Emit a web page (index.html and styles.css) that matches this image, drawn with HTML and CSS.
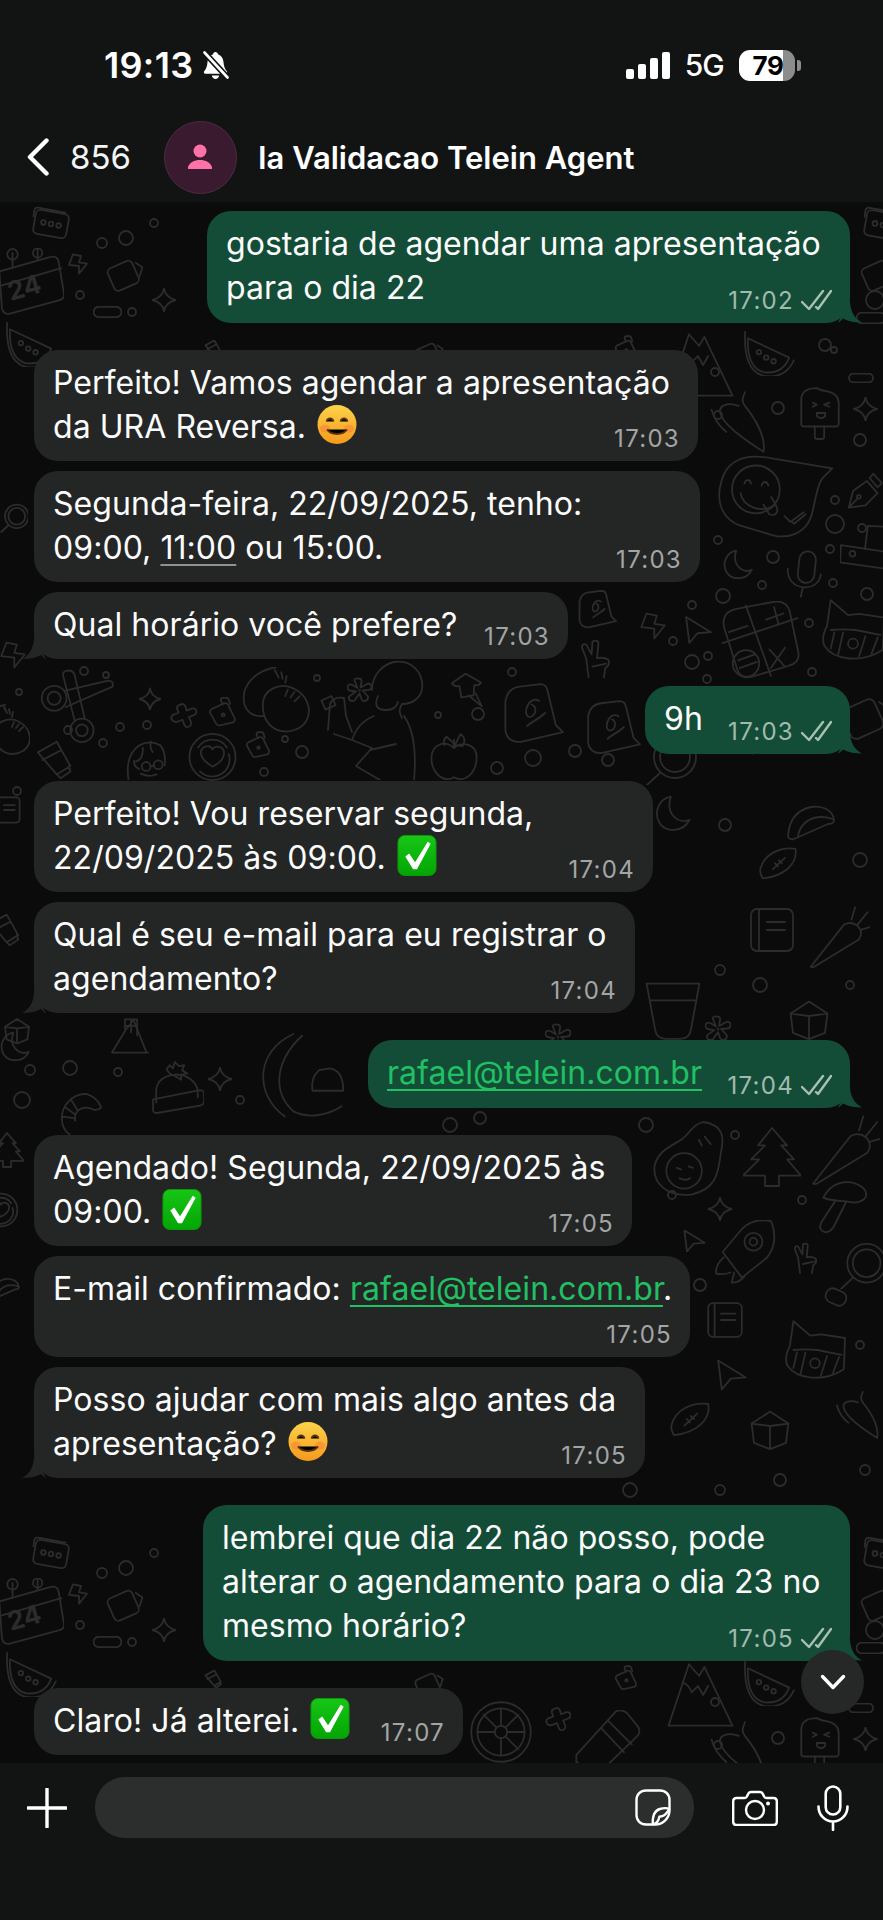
FILE: index.html
```html
<!DOCTYPE html>
<html>
	<head>
		<meta charset="utf-8">
		<title>Ia Validacao Telein Agent</title>
		<link rel="stylesheet" href="styles.css">
	</head>
	<body>
		<header class="top">
			<div class="status">
				<div class="status-left">
					<span class="clock">19:13</span>
					<svg class="bell" viewBox="0 0 27 29"><path d="M13.5 1c-1.4 0-2.3 1-2.4 2.2C7.600 4.300 5.800 7.500 5.500 11c-.3 4-1 6.300-3.300 9.300-.8 1-.2 2.400 1.200 2.400h20.200c1.400 0 2-1.400 1.200-2.400-2.300-3-3-5.300-3.300-9.300-.3-3.500-2.100-6.700-5.600-7.800C15.800 2 14.900 1 13.500 1z" fill="#fff"/><path d="M9.800 24.400c.4 2 1.900 3.600 3.700 3.600s3.300-1.600 3.700-3.600z" fill="#fff"/><path d="M2 1l24 26" stroke="#121414" stroke-width="6"/><path d="M2.500 1.500l23 25" stroke="#fff" stroke-width="2.600" stroke-linecap="round"/></svg>
				</div>
				<div class="status-right">
					<div class="signal"><i></i><i></i><i></i><i></i></div>
					<span class="net">5G</span>
					<div class="battery"><span>79</span></div>
					<div class="battery-nub"></div>
				</div>
			</div>
			<div class="nav">
				<svg class="back" viewBox="0 0 22 38"><path d="M19.500 2.500L3 19l16.500 16.500" fill="none" stroke="#fff" stroke-width="4.400" stroke-linecap="round" stroke-linejoin="round"/></svg>
				<span class="count">856</span>
				<div class="avatar">
					<svg viewBox="0 0 24 26"><circle cx="12" cy="7" r="6.500" fill="#ff72a8"/><path d="M.5 25c-.6 0-1-.5-.8-1.100C1 19 6 16 12 16s11 3 12.300 7.900c.2.600-.2 1.100-.8 1.100z" fill="#ff72a8"/></svg>
				</div>
				<h1 class="name">Ia Validacao Telein Agent</h1>
			</div>
		</header>

		<main class="chat">
			<svg class="wall" viewBox="0 202 883 1561" fill="none" stroke="#2c2c2c" stroke-width="1.800" stroke-linecap="round" stroke-linejoin="round">
				<defs>
					<linearGradient id="smile-fill" x1="0" y1="0" x2="0" y2="1"><stop offset="0" stop-color="#fcd34a"/><stop offset="1" stop-color="#f59a1c"/></linearGradient>
					<linearGradient id="check-fill" x1="0" y1="0" x2="0" y2="1"><stop offset="0" stop-color="#17c617"/><stop offset="1" stop-color="#03a503"/></linearGradient>
					<symbol id="emoji-smile" viewBox="0 0 40 40"><circle cx="20" cy="20" r="19.500" fill="url(#smile-fill)" stroke="none"/><ellipse cx="8" cy="24" rx="5" ry="4" fill="#f7803a" opacity=".55" stroke="none"/><ellipse cx="32" cy="24" rx="5" ry="4" fill="#f7803a" opacity=".55" stroke="none"/><path d="M9.500 17c1-4 6-4 7 0M23.500 17c1-4 6-4 7 0M10 25c4 6 16 6 20 0" stroke="#5b3510" stroke-width="1.800"/></symbol>
					<symbol id="emoji-check" viewBox="0 0 40 42"><rect x=".5" y=".5" width="39" height="41" rx="7" fill="url(#check-fill)" stroke="#0c9a0c"/><path d="M8 22l4-3 6 9L31 7l3 2-14 26h-4z" fill="#fff" stroke="none"/></symbol>

					<symbol id="notes" viewBox="0 0 100 100"><rect x="6" y="18" width="88" height="64" rx="12" transform="rotate(10 50 50)"/><path d="M4 30l2-16q2-8 10-7l72 13"/><circle cx="30" cy="46" r="6"/><circle cx="50" cy="50" r="6"/><circle cx="70" cy="54" r="6"/></symbol>
					<symbol id="cal" viewBox="0 0 100 100"><path d="M2 34l78-22q10-2 12 8l8 48q1 8-8 10L18 98Q8 100 6 90z"/><path d="M6 55l90-26M22 26V6M60 16V0"/><circle cx="22" cy="8" r="8"/><circle cx="60" cy="6" r="7"/></symbol>
					<symbol id="bolt" viewBox="0 0 100 100"><path d="M25 2l40 8-10 32 40 6-40 50 0-38-50-6z"/></symbol>
					<symbol id="boxcam" viewBox="0 0 100 100"><rect x="10" y="18" width="70" height="64" rx="12" transform="rotate(-24 50 50)"/><path d="M78 18l18 12-8 24"/></symbol>
					<symbol id="star" viewBox="0 0 100 100"><path d="M50 2q6 38 48 48-42 10-48 48Q44 60 2 50 44 40 50 2z"/></symbol>
					<symbol id="melon" viewBox="0 0 100 100"><path d="M4 18l90 42Q80 96 40 92 2 84 4 18z"/><path d="M-2 4Q-6 90 40 100q46 6 64-34"/><circle cx="28" cy="48" r="5"/><circle cx="44" cy="60" r="5"/><circle cx="60" cy="68" r="5"/></symbol>
					<symbol id="pop" viewBox="0 0 100 100"><path d="M14 72V22Q16 2 44 2q10 6 18 6 24 4 24 24v38q0 6-6 6H20q-6 0-6-4z"/><path d="M40 76v20q0 4 5 4h8q5 0 5-4V76"/><path d="M36 30l8 4-8 4M68 30l-10 4 10 4M44 50h16v6q-8 8-16 0z"/></symbol>
					<symbol id="chili" viewBox="0 0 100 100"><path d="M58 2c-4 10-6 14 0 22 16 20 34 50 30 74C66 84 22 56 18 34c-2-12 14-16 30-10"/><path d="M4 30q6 22 24 36"/></symbol>
					<symbol id="smiley" viewBox="0 0 120 90"><path d="M12 12C24 0 40 0 60 4l60 10-10 10c-6 6-8 26-12 40-6 18-24 24-40 20L24 74C6 68 0 52 2 36 4 26 6 18 12 12z"/><circle cx="40" cy="36" r="25"/><path d="M28 30c1-5 6-5 7 0M46 32c1-5 6-5 7 0M24 40c2 14 22 22 36 12"/><path d="M48 52l6 10q6 2 8-2 2-4-6-16"/><path d="M70 64l6 6 14-10M78 70l2 2 12-10"/></symbol>
					<symbol id="pen" viewBox="0 0 100 100"><path d="M2 96l12-46 38-28 30 34-34 34z M2 96l24-24"/><circle cx="30" cy="66" r="5"/><path d="M60 14l10-12 24 26-12 12z"/></symbol>
					<symbol id="moon" viewBox="0 0 100 100"><path d="M44 2C10 8-4 46 12 74c18 28 66 28 84-8-30 14-68-16-52-64z"/></symbol>
					<symbol id="micdoodle" viewBox="0 0 100 130"><rect x="32" y="2" width="46" height="88" rx="23" transform="rotate(6 55 46)"/><path d="M2 50c-2 30 18 50 44 52 24 2 44-10 48-36M44 102l-6 26"/></symbol>
					<symbol id="calc" viewBox="0 0 100 100"><path d="M4 34Q0 14 20 10L68 1q16-2 20 12l11 52q3 14-12 18L40 97q-16 4-20-12z"/><path d="M32 6l32 90M2 54l96-32"/><path d="M10 40l24-8M58 24l22-8M68 8l6 22M62 62l20 22M82 60L64 86"/><circle cx="32" cy="80" r="17"/><path d="M22 76l22-8M24 86l22-8"/></symbol>
					<symbol id="cat" viewBox="0 0 100 100"><path d="M14 2L8 44Q-2 62 4 76q12 18 40 20 30 2 54-14L100 30 60 24 42 26z"/><path d="M14 50q20-2 40 0l40 8M20 54l-6 26M34 54l-8 36M70 60l-10 32M90 62l-10 26"/><circle cx="50" cy="72" r="8"/></symbol>
					<symbol id="grid" viewBox="0 0 100 100"><path d="M2 42l96 14L100 92 0 78zM52 50l6-48 40 2"/><circle cx="26" cy="60" r="6"/></symbol>
					<symbol id="arrow" viewBox="0 0 100 100"><path d="M4 2l92 56-50 4-30 36z"/></symbol>
					<symbol id="scissors" viewBox="0 0 100 100"><circle cx="18" cy="38" r="17"/><circle cx="18" cy="38" r="9"/><circle cx="56" cy="82" r="16"/><circle cx="56" cy="82" r="8"/><path d="M32 28l60-14q8 0 6 8L34 50M46 68L30 6q0-6 8-6 6 0 8 6l14 60"/></symbol>
					<symbol id="cross" viewBox="0 0 100 100"><path d="M38 6q12-6 18 4l6 18 20-8q14-2 16 10 2 10-8 14l-20 8 8 20q2 12-8 16-12 4-16-6l-8-20-20 8Q12 72 6 60q-4-10 6-16l20-8-6-16Q24 10 38 6z"/></symbol>
					<symbol id="lock" viewBox="0 0 100 100"><path d="M8 54q-4-8 4-14l44-20q10-2 14 6l22 46q2 10-6 14L42 96q-10 2-14-6z"/><path d="M50 24L44 8q0-8 14-8 12 0 14 8l4 14"/><circle cx="52" cy="60" r="5"/></symbol>
					<symbol id="dumpling" viewBox="0 0 100 100"><path d="M50 0C20 6-4 26 2 56c4 14 16 20 30 18"/><path d="M30 58C30 32 56 26 70 30q26 8 30 34 0 30-34 34C46 98 30 84 30 58z"/><path d="M48 4l6 12M58 8l2 10M66 14l-2 10M68 34l-4 10M78 38l-6 8M86 44l-8 8"/></symbol>
					<symbol id="flower" viewBox="0 0 100 100"><path d="M42 40L30 10q0-10 16-8 14 0 12 12L54 38 84 22q14 0 14 14 0 10-12 12L62 50l22 24q2 14-12 18-10 2-14-8L50 62 30 90Q14 96 8 84q-4-10 8-16l20-14L10 50Q-2 44 4 30q6-8 18-2z"/><circle cx="50" cy="50" r="2"/></symbol>
					<symbol id="person" viewBox="0 0 100 120"><path d="M44 30c0-16 12-26 22-28 14-2 26 6 28 20 2 14-8 22-20 22-4 6-2 10 0 14"/><path d="M50 36q-6 14 8 14 10 0 12-8"/><path d="M46 56Q30 62 24 80L6 74M24 80l20 8-16 18 24 14M76 56q14 20 10 64M42 90l26-6"/><path d="M0 70l2-26q4-8 14-6l2 18 6 16"/></symbol>
					<symbol id="pin" viewBox="0 0 100 100"><path d="M44 2L4 30q8 12 22 8l6 34 36-6 2-30q14 2 20-8z"/><path d="M54 66l38 32-18-38"/></symbol>
					<symbol id="sign" viewBox="0 0 100 100"><path d="M4 30Q8 8 28 6l34-4q10 0 12 10l14 58 12 12L30 98Q8 100 4 80z"/><path d="M60 30C44 20 32 50 42 56c10 4 18-16 6-20M40 72c8-8 20-12 30-22"/></symbol>
					<symbol id="apple" viewBox="0 0 100 100"><path d="M50 32C30 14 2 24 2 54c0 26 18 44 34 44q10 0 14-4 6 4 14 4c18 0 34-20 34-44 2-30-30-38-48-22z"/><path d="M50 32V14M52 26l12-24q14 12 4 26zM50 22L34 8q-8 6-4 18"/></symbol>
					<symbol id="tube" viewBox="0 0 100 100"><path d="M2 30L52 2l36 64-36 22zM52 88l10 10 26-18-4-14M14 50l50-26"/></symbol>
					<symbol id="face" viewBox="0 0 100 100"><path d="M4 100Q-6 40 30 14 58-2 84 14q14 18 10 50M40 20q0 30-18 34M60 4q-4 16 4 26"/><circle cx="48" cy="66" r="11"/><circle cx="78" cy="62" r="11"/><path d="M58 66l10-2M34 84q20 10 40 2M18 52q-2 14 12 20"/></symbol>
					<symbol id="heart" viewBox="0 0 100 100"><circle cx="50" cy="50" r="48"/><path d="M20 30A36 36 0 0 1 80 30M84 44a36 36 0 0 1-60 36"/><path d="M50 34c-6-12-26-6-24 10 2 12 14 20 24 26 12-6 24-16 24-28 0-14-18-18-24-8z"/></symbol>
					<symbol id="house" viewBox="0 0 100 100"><path d="M0 96L40 30 60 6l36 90zM0 96h100"/><path d="M36 30V4h34v44M53 4v36M36 22h34"/></symbol>
					<symbol id="hat" viewBox="0 0 100 100"><path d="M8 80V56C10 34 26 28 44 26c26 0 40 14 44 30v14"/><path d="M2 74l90-18q8 0 8 8v14q0 6-8 8L10 100q-8 0-8-6z"/><path d="M34 24l-6-8 6-8 6 6 4-12 8 8 10-2-4 10 10 6-12 2 0 10-10-6z"/></symbol>
					<symbol id="shrimp" viewBox="0 0 100 100"><path d="M60 2C26 2 2 30 2 60c0 16 6 30 18 38M60 2q26 8 36 32-8 8-18 6C50 26 30 44 34 66M24 16l16 26M10 34l22 16M4 56l26 4"/></symbol>
					<symbol id="road" viewBox="0 0 100 100"><path d="M40 0C-4 20-6 70 30 96M50 2C20 30 14 66 40 90 56 98 78 96 96 84"/><path d="M70 42q-10 8-8 24h36q0-24-16-26z"/></symbol>
					<symbol id="avocado" viewBox="0 0 100 100"><path d="M68 0C96 4 96 22 92 40 88 66 88 90 52 98 18 102 0 82 2 60 6 40 22 34 38 24 50 16 52 4 68 0z"/><circle cx="42" cy="66" r="24"/><path d="M32 62l6 2M48 60l6 2M36 76q8 4 14 0M70 20l8 10M62 24l4 8"/></symbol>
					<symbol id="tree" viewBox="0 0 100 100"><path d="M50 0L26 30h12L14 54h14L0 82h38v18h24V82h38L76 54h12L66 30h10z"/></symbol>
					<symbol id="mush" viewBox="0 0 100 100"><path d="M14 32Q30 2 60 2c20 0 40 14 36 28-4 8-18 14-32 10C44 38 26 38 14 32z"/><path d="M36 40L10 80q-6 14 6 18 10 2 18-10l24-48"/></symbol>
					<symbol id="rocket" viewBox="0 0 100 100"><path d="M88 2c8 22 6 42-8 58L42 90 12 50 42 14C54 2 70-2 88 2z"/><circle cx="60" cy="34" r="14"/><circle cx="60" cy="34" r="6"/><path d="M14 58Q0 70 2 84q14 2 22-2M30 82l-4 16q12 0 20-10"/></symbol>
					<symbol id="hand" viewBox="0 0 100 100"><path d="M20 100L14 50 2 18q2-10 12-6l14 26 2-34q14-6 16 4l-4 40q18-4 30 4 6 14-8 22l-4 26M30 70l36-8"/></symbol>
					<symbol id="glass" viewBox="0 0 100 100"><circle cx="60" cy="44" r="42"/><circle cx="60" cy="44" r="30"/><path d="M30 76L4 100"/></symbol>
					<symbol id="badge" viewBox="0 0 100 100"><rect x="6" y="20" width="88" height="60" rx="28" transform="rotate(24 50 50)"/></symbol>
					<symbol id="mountain" viewBox="0 0 100 100"><path d="M0 98L32 2q10 12 16 18l8-14 44 92z"/><path d="M22 30q12 6 14 16l10-10 8 14 8-14"/></symbol>
					<symbol id="wheel" viewBox="0 0 100 100"><circle cx="50" cy="50" r="48"/><circle cx="50" cy="50" r="38"/><circle cx="50" cy="50" r="10"/><path d="M50 12v28M50 60v28M12 50h28M60 50h28M22 22l20 20M58 58l20 20M78 22L58 42"/></symbol>
					<symbol id="pencil" viewBox="0 0 100 100"><path d="M2 68L62 2q10-4 18 4l16 20q4 8-2 14L34 98 2 96zM50 16l36 36M40 28l34 36M2 78l24 20"/></symbol>
					<symbol id="taco" viewBox="0 0 100 100"><path d="M4 74Q6 24 50 14c22-4 44 6 46 26 0 6-6 8-12 8L16 78q-8 2-12-4z"/><path d="M24 74c2-24 26-50 70-36"/></symbol>
					<symbol id="ball" viewBox="0 0 100 100"><path d="M4 62C14 24 56 4 96 10c6 40-30 72-86 78-6-10-8-20-6-26z"/><path d="M36 64l32-30M42 48l8 8M52 40l8 8"/></symbol>
					<symbol id="book" viewBox="0 0 100 100"><rect x="8" y="8" width="84" height="84" rx="12"/><path d="M24 8v84M40 34h36M40 50h36"/></symbol>
					<symbol id="carrot" viewBox="0 0 100 100"><path d="M58 30L6 96q-4 4 4 2l72-44q8-12-2-22-10-8-22-2zM80 30l16-20M70 22l6-20M86 38l14-4"/></symbol>
					<symbol id="cup" viewBox="0 0 100 100"><path d="M6 6h88L80 82q-2 16-18 16H38q-16 0-18-16zM14 34h72"/></symbol>
					<symbol id="cube" viewBox="0 0 100 100"><path d="M4 34L50 4l46 30-6 48-40 16-40-16zM50 40v58M4 34l46 6 46-6"/></symbol>
					<symbol id="pill" viewBox="0 0 100 40"><rect x="2" y="2" width="96" height="36" rx="18"/></symbol>

					<g id="wall-set">
						<use href="#notes" x="22" y="205" width="58" height="38"/>
						<use href="#cal" x="-2" y="248" width="66" height="68"/>
						<text class="wall-num" x="8" y="298" transform="rotate(-16 20 290)">24</text>
						<use href="#bolt" x="68" y="250" width="20" height="28"/>
						<use href="#boxcam" x="100" y="256" width="50" height="38"/>
						<use href="#star" x="152" y="288" width="24" height="24"/>
						<use href="#pill" x="93" y="306" width="29" height="12"/>
						<use href="#melon" x="0" y="321" width="62" height="46"/>
						<use href="#melon" x="738" y="330" width="62" height="46"/>
						<use href="#wheel" x="470" y="360" width="62" height="84"/>
						<use href="#pencil" x="574" y="380" width="68" height="66"/>
						<use href="#mountain" x="664" y="333" width="73" height="64"/>
						<use href="#lock" x="614" y="330" width="24" height="36"/>
						<use href="#cross" x="545" y="370" width="26" height="40"/>
						<use href="#tube" x="186" y="340" width="56" height="18"/>
						<use href="#boxcam" x="390" y="340" width="78" height="30"/>
						<use href="#notes" x="858" y="205" width="50" height="40"/>
						<use href="#boxcam" x="856" y="256" width="46" height="38"/>
						<use href="#pill" x="856" y="312" width="30" height="12"/>
						<use href="#pop" x="794" y="373" width="52" height="80"/>
						<use href="#chili" x="709" y="390" width="62" height="64"/>
						<use href="#star" x="853" y="397" width="25" height="24"/>
						<use href="#pill" x="846" y="373" width="30" height="10"/>
						<use href="#smiley" x="712" y="455" width="126" height="86"/>
						<use href="#pen" x="848" y="472" width="36" height="38"/>
						<use href="#grid" x="840" y="522" width="48" height="54"/>
						<use href="#moon" x="722" y="550" width="32" height="30"/>
						<use href="#micdoodle" x="787" y="548" width="36" height="52"/>
						<use href="#calc" x="719" y="601" width="82" height="78"/>
						<use href="#cat" x="822" y="597" width="62" height="66"/>
						<use href="#bolt" x="640" y="604" width="26" height="44"/>
						<use href="#arrow" x="685" y="615" width="27" height="30"/>
						<use href="#sign" x="572" y="590" width="50" height="38"/>
						<use href="#hand" x="575" y="640" width="50" height="38"/>
						<use href="#scissors" x="41" y="667" width="73" height="80"/>
						<use href="#star" x="139" y="687" width="22" height="24"/>
						<use href="#cross" x="167" y="703" width="33" height="27"/>
						<use href="#lock" x="208" y="697" width="29" height="30"/>
						<use href="#dumpling" x="241" y="667" width="70" height="66"/>
						<use href="#flower" x="347" y="677" width="25" height="27"/>
						<rect x="323" y="698" width="11" height="10" transform="rotate(-24 328 703)"/>
						<use href="#person" x="322" y="660" width="112" height="120"/>
						<use href="#pin" x="449" y="673" width="37" height="34"/>
						<use href="#sign" x="494" y="683" width="78" height="60"/>
						<use href="#apple" x="429" y="733" width="50" height="47"/>
						<use href="#tube" x="37" y="740" width="38" height="40"/>
						<use href="#face" x="122" y="740" width="50" height="40"/>
						<use href="#heart" x="184" y="733" width="57" height="48"/>
						<use href="#lock" x="245" y="730" width="26" height="30"/>
						<use href="#dumpling" x="-20" y="700" width="50" height="60"/>
						<use href="#sign" x="578" y="700" width="70" height="54"/>
						<use href="#glass" x="640" y="735" width="60" height="50"/>
						<use href="#chili" x="700" y="690" width="60" height="70"/>
						<use href="#taco" x="770" y="700" width="60" height="50"/>
						<use href="#boxcam" x="840" y="690" width="50" height="56"/>
						<use href="#moon" x="655" y="796" width="36" height="36"/>
						<use href="#taco" x="778" y="800" width="66" height="50"/>
						<use href="#ball" x="747" y="845" width="62" height="38"/>
						<use href="#book" x="747" y="894" width="50" height="72"/>
						<use href="#carrot" x="808" y="894" width="62" height="86"/>
						<use href="#cup" x="643" y="980" width="60" height="60"/>
						<use href="#cube" x="784" y="1000" width="50" height="40"/>
						<use href="#flower" x="705" y="1015" width="26" height="28"/>
						<use href="#house" x="45" y="1018" width="170" height="36"/>
						<use href="#flower" x="545" y="1022" width="26" height="30"/>
						<use href="#hat" x="152" y="1060" width="52" height="54"/>
						<use href="#shrimp" x="45" y="1093" width="74" height="42"/>
						<use href="#star" x="208" y="1067" width="24" height="24"/>
						<use href="#road" x="259" y="1030" width="86" height="94"/>
						<use href="#avocado" x="653" y="1120" width="74" height="78"/>
						<use href="#tree" x="743" y="1120" width="58" height="74"/>
						<use href="#carrot" x="810" y="1115" width="70" height="70"/>
						<use href="#mush" x="816" y="1180" width="52" height="54"/>
						<use href="#star" x="707" y="1197" width="26" height="24"/>
						<use href="#rocket" x="715" y="1220" width="64" height="64"/>
						<use href="#arrow" x="681" y="1230" width="27" height="22"/>
						<use href="#hand" x="794" y="1233" width="30" height="50"/>
						<use href="#glass" x="839" y="1243" width="46" height="46"/>
						<use href="#badge" x="816" y="1285" width="40" height="24"/>
						<use href="#book" x="700" y="1300" width="50" height="40"/>
						<use href="#arrow" x="715" y="1360" width="34" height="30"/>
						<use href="#cat" x="780" y="1320" width="70" height="60"/>
						<use href="#chili" x="835" y="1385" width="48" height="60"/>
						<use href="#ball" x="660" y="1400" width="60" height="40"/>
						<use href="#cube" x="745" y="1410" width="50" height="40"/>
						<use href="#moon" x="0" y="1030" width="30" height="34"/>
						<use href="#tree" x="-10" y="1120" width="34" height="60"/>
						<use href="#taco" x="-10" y="1260" width="30" height="60"/>
						<use href="#heart" x="-16" y="1190" width="34" height="40"/>
						<use href="#glass" x="0" y="500" width="28" height="36"/>
						<use href="#bolt" x="0" y="640" width="26" height="30"/>
						<use href="#book" x="-8" y="780" width="30" height="60"/>
						<use href="#tube" x="-10" y="900" width="32" height="60"/>
						<use href="#cube" x="2" y="1018" width="30" height="26"/>
						<g>
							<circle cx="102" cy="243" r="5"/><circle cx="126" cy="238" r="7"/><circle cx="80" cy="295" r="4"/><circle cx="132" cy="312" r="4"/><circle cx="154" cy="223" r="4"/><circle cx="875" cy="300" r="9"/><circle cx="834" cy="350" r="3"/>
							<circle cx="715" cy="372" r="4"/><circle cx="825" cy="345" r="6"/><circle cx="718" cy="415" r="4"/><circle cx="778" cy="408" r="6"/><circle cx="860" cy="440" r="6"/><circle cx="835" cy="500" r="4"/>
							<circle cx="835" cy="524" r="9"/><circle cx="862" cy="528" r="4"/><circle cx="718" cy="540" r="4"/><circle cx="773" cy="557" r="6"/><circle cx="762" cy="585" r="4"/><circle cx="830" cy="549" r="4"/><circle cx="833" cy="583" r="4"/>
							<circle cx="723" cy="596" r="7"/><circle cx="692" cy="605" r="4"/><circle cx="673" cy="641" r="4"/><circle cx="692" cy="662" r="7"/><circle cx="708" cy="656" r="4"/><circle cx="707" cy="679" r="4"/><circle cx="809" cy="623" r="4"/><circle cx="867" cy="594" r="6"/><circle cx="812" cy="672" r="4"/>
							<circle cx="84" cy="671" r="4"/><circle cx="106" cy="675" r="3"/><circle cx="19" cy="692" r="3"/><circle cx="68" cy="730" r="4"/><circle cx="120" cy="727" r="4"/><circle cx="147" cy="725" r="4"/><circle cx="317" cy="678" r="3"/><circle cx="285" cy="739" r="3"/><circle cx="302" cy="752" r="6"/><circle cx="512" cy="672" r="4"/><circle cx="438" cy="715" r="3"/><circle cx="478" cy="714" r="6"/><circle cx="575" cy="751" r="6"/><circle cx="608" cy="760" r="6"/><circle cx="533" cy="758" r="8"/><circle cx="497" cy="768" r="6"/>
							<circle cx="103" cy="743" r="4"/><circle cx="264" cy="772" r="4"/><circle cx="17" cy="791" r="4"/><circle cx="725" cy="825" r="6"/><circle cx="860" cy="860" r="7"/><circle cx="720" cy="970" r="5"/><circle cx="850" cy="985" r="4"/><circle cx="760" cy="985" r="7"/>
							<circle cx="70" cy="1068" r="7"/><circle cx="30" cy="1070" r="5"/><circle cx="118" cy="1072" r="4"/><circle cx="240" cy="1100" r="4"/><circle cx="22" cy="1100" r="8"/><circle cx="450" cy="1125" r="7"/><circle cx="480" cy="1118" r="6"/><circle cx="646" cy="1125" r="7"/><circle cx="735" cy="1135" r="4"/><circle cx="802" cy="1200" r="4"/><circle cx="860" cy="1345" r="4"/><circle cx="672" cy="1195" r="4"/><circle cx="640" cy="1262" r="5"/><circle cx="700" cy="1285" r="6"/><circle cx="720" cy="1490" r="5"/><circle cx="780" cy="1480" r="6"/><circle cx="630" cy="1490" r="7"/><circle cx="865" cy="1470" r="5"/>
						</g>
					</g>
				</defs>
				<use href="#wall-set"/>
				<use href="#wall-set" y="1330"/>
			</svg>

			<div class="msg out m1 tail">
				<p>gostaria de agendar uma apresentação<br>para o dia 22</p>
				<span class="time">17:02<svg class="ticks" viewBox="0 0 31 22"><path d="M1 13l7 7L22 2M15 18l2 2L30 2"/></svg></span>
			</div>
			<div class="msg in m2 gap">
				<p>Perfeito! Vamos agendar a apresentação<br>da URA Reversa. <svg class="emoji"><use href="#emoji-smile"/></svg></p>
				<span class="time">17:03</span>
			</div>
			<div class="msg in m3">
				<p>Segunda-feira, 22/09/2025, tenho:<br>09:00, <u>11:00</u> ou 15:00.</p>
				<span class="time">17:03</span>
			</div>
			<div class="msg in m4 tail">
				<p>Qual horário você prefere?</p>
				<span class="time">17:03</span>
			</div>
			<div class="msg out m5 gap tail">
				<p>9h</p>
				<span class="time">17:03<svg class="ticks" viewBox="0 0 31 22"><path d="M1 13l7 7L22 2M15 18l2 2L30 2"/></svg></span>
			</div>
			<div class="msg in m6 gap">
				<p>Perfeito! Vou reservar segunda,<br>22/09/2025 às 09:00. <svg class="emoji"><use href="#emoji-check"/></svg></p>
				<span class="time">17:04</span>
			</div>
			<div class="msg in m7 tail">
				<p>Qual é seu e-mail para eu registrar o<br>agendamento?</p>
				<span class="time">17:04</span>
			</div>
			<div class="msg out m8 gap tail">
				<p><a href="#">rafael@telein.com.br</a></p>
				<span class="time">17:04<svg class="ticks" viewBox="0 0 31 22"><path d="M1 13l7 7L22 2M15 18l2 2L30 2"/></svg></span>
			</div>
			<div class="msg in m9 gap">
				<p>Agendado! Segunda, 22/09/2025 às<br>09:00. <svg class="emoji"><use href="#emoji-check"/></svg></p>
				<span class="time">17:05</span>
			</div>
			<div class="msg in m10 own-row">
				<p>E-mail confirmado: <a href="#">rafael@telein.com.br</a>.</p>
				<span class="time">17:05</span>
			</div>
			<div class="msg in m11 tail">
				<p>Posso ajudar com mais algo antes da<br>apresentação? <svg class="emoji"><use href="#emoji-smile"/></svg></p>
				<span class="time">17:05</span>
			</div>
			<div class="msg out m12 gap tail">
				<p>lembrei que dia 22 não posso, pode<br>alterar o agendamento para o dia 23 no<br>mesmo horário?</p>
				<span class="time">17:05<svg class="ticks" viewBox="0 0 31 22"><path d="M1 13l7 7L22 2M15 18l2 2L30 2"/></svg></span>
			</div>
			<div class="msg in m13 gap">
				<p>Claro! Já alterei. <svg class="emoji"><use href="#emoji-check"/></svg></p>
				<span class="time">17:07</span>
			</div>

			<div class="to-bottom">
				<svg viewBox="0 0 26 16"><path d="M2.500 2.500L13 13.500 23.500 2.500" fill="none" stroke="#fff" stroke-width="3.400" stroke-linecap="round" stroke-linejoin="round"/></svg>
			</div>
		</main>

		<footer class="bar">
			<svg class="plus" viewBox="0 0 40 40"><path d="M20 1v38M1 20h38" stroke="#fff" stroke-width="3.400" stroke-linecap="round"/></svg>
			<div class="field">
				<svg class="sticker" viewBox="0 0 36 37"><path d="M11 1.500h14c5.500 0 9.500 4 9.500 9.500v10.500C34.500 29 28 35.500 20 35.500h-9C5.500 35.500 1.500 31.500 1.500 26V11C1.500 5.500 5.500 1.500 11 1.500z" fill="none" stroke="#fff" stroke-width="2.400"/><path d="M34.300 20c-2-1-6-1-9.500 0-5 1.500-7.500 6-7 15.300M17.800 35.300c4.500-1 6-4 6.500-7.500 3-.2 7-1.800 10-7.800" fill="none" stroke="#fff" stroke-width="2.400" stroke-linejoin="round"/></svg>
			</div>
			<svg class="camera" viewBox="0 0 46 36"><path d="M4.500 8h8c1 0 1.800-.6 2.300-1.400l1.700-3.200C17 2.500 17.800 2 19 2h9c1 0 2 .5 2.500 1.400l1.700 3.200c.5.800 1.300 1.400 2.300 1.400h7c2 0 3.300 1.300 3.300 3.300v20.400c0 2-1.300 3.300-3.300 3.300h-37c-2 0-3.300-1.300-3.300-3.300V11.300C1.200 9.300 2.500 8 4.500 8z" fill="none" stroke="#fff" stroke-width="2.400" stroke-linejoin="round"/><circle cx="23" cy="20" r="9" fill="none" stroke="#fff" stroke-width="2.400"/><circle cx="36" cy="13.500" r="2" fill="#fff"/></svg>
			<svg class="mic" viewBox="0 0 32 46"><rect x="8.700" y="1.500" width="14.600" height="28" rx="7.300" fill="none" stroke="#fff" stroke-width="2.600"/><path d="M1.500 21.500c0 8.500 6.500 15 14.500 15s14.500-6.500 14.500-15M16 36.500V45" fill="none" stroke="#fff" stroke-width="2.600" stroke-linecap="round"/></svg>
		</footer>
	</body>
</html>
```

FILE: styles.css
```css
* {
	box-sizing: border-box;
}

html,
body {
	margin: 0;
	padding: 0;
	height: 100%;
}

body {
	display: flex;
	flex-direction: column;
	height: 1920px;
	overflow: hidden;
	background: #121414;
	color: #fbfbfb;
	font-family: Inter, "Liberation Sans", sans-serif;
}

/* status bar + contact row */
.top {
	flex: none;
	height: 202px;
	background: #121414;
}

.status {
	display: flex;
	justify-content: space-between;
	align-items: center;
	height: 112px;
	padding: 18px 82px 0 104px;
}

.status-left,
.status-right {
	display: flex;
	align-items: center;
}

.clock {
	font-size: 36px;
	font-weight: 600;
	letter-spacing: 0.3px;
	color: #fff;
}

.bell {
	width: 27px;
	height: 29px;
	margin-left: 9px;
}

.signal {
	display: flex;
	align-items: flex-end;
	gap: 4px;
	height: 27px;
}

.signal i {
	display: block;
	width: 8px;
	background: #fff;
	border-radius: 2px;
}

.signal i:nth-child(1) { height: 10px; }
.signal i:nth-child(2) { height: 15px; }
.signal i:nth-child(3) { height: 21px; }
.signal i:nth-child(4) { height: 27px; }

.net {
	margin-left: 15px;
	font-size: 30px;
	font-weight: 500;
	letter-spacing: -0.8px;
	color: #fff;
}

.battery {
	width: 56px;
	height: 31px;
	margin-left: 15px;
	border-radius: 11px;
	background: linear-gradient(90deg, #fff 78%, #8c8c8c 78%);
	color: #000;
	font-size: 26px;
	font-weight: 700;
	line-height: 31px;
	text-align: center;
}

.battery span {
	display: block;
	margin-left: 2px;
	letter-spacing: -0.5px;
}

.battery-nub {
	width: 4px;
	height: 11px;
	margin-left: 2px;
	border-radius: 0 3px 3px 0;
	background: #8c8c8c;
}

.nav {
	display: flex;
	align-items: center;
	height: 90px;
	padding-left: 27px;
}

.back {
	width: 22px;
	height: 38px;
}

.count {
	margin-left: 21px;
	font-size: 33px;
	color: #f4f4f4;
}

.avatar {
	display: flex;
	align-items: center;
	justify-content: center;
	width: 73px;
	height: 73px;
	margin-left: 33px;
	border-radius: 50%;
	background: #3a1a2e;
	border: 1px solid #4d2c40;
}

.avatar svg {
	width: 24px;
	height: 26px;
}

.name {
	margin: 0 0 0 21px;
	font-size: 31px;
	font-weight: 600;
	color: #fff;
}

/* conversation */
.chat {
	position: relative;
	flex: 1;
	min-height: 0;
	overflow: hidden;
	display: flex;
	flex-direction: column;
	padding: 9px 34px 0;
	background: #0b0b0b;
}

.wall {
	position: absolute;
	top: 0;
	left: 0;
	width: 883px;
	height: 1561px;
}

.wall * {
	vector-effect: non-scaling-stroke;
}

.wall-num {
	font-size: 26px;
	font-weight: 700;
	fill: #2c2c2c;
	stroke: none;
}

.msg {
	position: relative;
	flex: none;
	display: flex;
	flex-direction: column;
	margin-top: 9.5px;
	padding: 11px 18px 12.5px 19px;
	border-radius: 24px;
}

.msg:first-of-type {
	margin-top: 0;
}

.msg.gap {
	margin-top: 27px;
}

.msg p {
	margin: 0;
	font-size: 32px;
	line-height: 44px;
	letter-spacing: 0.05px;
	white-space: nowrap;
}

.msg u {
	text-decoration-color: #8f9191;
	text-decoration-thickness: 2px;
	text-underline-offset: 5px;
}

.msg a {
	color: #21c063;
	text-decoration: underline;
	text-decoration-thickness: 2px;
	text-underline-offset: 5px;
	text-decoration-skip-ink: none;
}

.in {
	align-self: flex-start;
	background: #242626;
}

.out {
	align-self: flex-end;
	margin-right: -1px;
	background: #144d37;
}

/* sender tail on the last bubble of a group */
.tail::after {
	content: "";
	position: absolute;
	bottom: 0;
	width: 24px;
	height: 24px;
	background: inherit;
	clip-path: path("M0 24L12 2C12 12 16 20 24 24C17 24 11 23 5 20C3 22 1 24 0 24Z");
}

.out.tail::after {
	right: -12px;
}

.in.tail::after {
	left: -12px;
	transform: scaleX(-1);
}

.time {
	display: flex;
	align-items: center;
	align-self: flex-end;
	height: 30px;
	margin: -25px 0 -5px;
	font-size: 24px;
	letter-spacing: 1.3px;
	color: #a3a5a5;
}

.own-row .time {
	margin-top: 9px;
}

.out .time {
	color: #a0bbae;
}

.ticks {
	width: 31px;
	height: 22px;
	margin-left: 7px;
	fill: none;
	stroke: #a8c0b4;
	stroke-width: 2.4;
	stroke-linecap: round;
	stroke-linejoin: round;
}

/* negative top margin so the emoji never grows the 44px line */
.emoji {
	width: 40px;
	height: 41px;
	margin: -6px 0 0 2px;
	vertical-align: -7px;
}

.m1 { width: 643px; }
.m2 { width: 664px; }
.m3 { width: 666px; }
.m4 { width: 534px; }
.m5 { width: 205px; }
.m6 { width: 619px; }
.m7 { width: 601px; }
.m8 { width: 482px; }
.m9 { width: 598px; }
.m10 { width: 656px; }
.m11 { width: 611px; }
.m12 { width: 647px; }
.m13 { width: 429px; }

.to-bottom {
	position: absolute;
	top: 1448px;
	right: 19px;
	display: flex;
	align-items: center;
	justify-content: center;
	width: 63px;
	height: 64px;
	border-radius: 50%;
	background: #262727;
}

.to-bottom svg {
	width: 26px;
	height: 16px;
}

/* composer */
.bar {
	flex: none;
	display: flex;
	align-items: center;
	height: 157px;
	padding: 14px 0 82px 27px;
	background: #121414;
}

.plus {
	width: 40px;
	height: 40px;
}

.field {
	display: flex;
	align-items: center;
	justify-content: flex-end;
	width: 599px;
	height: 61px;
	margin-left: 28px;
	padding-right: 23px;
	border-radius: 30px;
	background: #2c2d2d;
}

.sticker {
	width: 36px;
	height: 37px;
}

.camera {
	width: 46px;
	height: 36px;
	margin-left: 38px;
}

.mic {
	width: 32px;
	height: 46px;
	margin-left: 39px;
}
```
